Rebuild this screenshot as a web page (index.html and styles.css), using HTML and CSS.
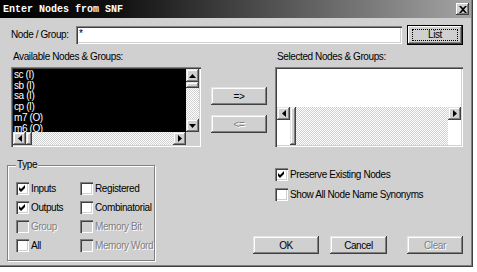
FILE: index.html
```html
<!DOCTYPE html>
<html lang="en">
<head>
    <meta charset="UTF-8">
    <title>Enter Nodes from SNF</title>
    <link rel="stylesheet" href="styles.css">
</head>
<body>
    <div class="dialog">
        <div class="titlebar">
            <span class="title">Enter Nodes from SNF</span>
            <span class="close-btn">
                <svg width="8" height="7" viewBox="0 0 8 7"><path d="M0 0h2l2 2 2-2h2L5 3.5 8 7H6L4 5 2 7H0l3-3.5z" fill="#000"/></svg>
            </span>
        </div>

        <div class="node-row">
            <span class="node-label">Node / Group:</span>
            <div class="text-input">*</div>
            <div class="btn btn-default list-btn"><span class="focus-rect">List</span></div>
        </div>

        <div class="caption-row">
            <span class="caption avail-caption">Available Nodes &amp; Groups:</span>
            <span class="caption">Selected Nodes &amp; Groups:</span>
        </div>

        <div class="lists-row">
            <div class="listbox avail-list">
                <div class="list-top">
                    <div class="list-items dark">
                        <div>sc (I)</div>
                        <div>sb (I)</div>
                        <div>sa (I)</div>
                        <div>cp (I)</div>
                        <div>m7 (O)</div>
                        <div>m6 (O)</div>
                    </div>
                    <div class="vscroll">
                        <span class="sb-btn"><svg width="7" height="4" viewBox="0 0 7 4"><path d="M3.5 0L7 4H0z"/></svg></span>
                        <span class="sb-thumb v-thumb"></span>
                        <span class="sb-track"></span>
                        <span class="sb-btn"><svg width="7" height="4" viewBox="0 0 7 4"><path d="M0 0h7L3.5 4z"/></svg></span>
                    </div>
                </div>
                <div class="hscroll-row">
                    <div class="hscroll">
                        <span class="sb-btn"><svg width="4" height="7" viewBox="0 0 4 7"><path d="M0 3.5L4 0v7z"/></svg></span>
                        <span class="sb-thumb h-thumb"></span>
                        <span class="sb-track"></span>
                        <span class="sb-btn"><svg width="4" height="7" viewBox="0 0 4 7"><path d="M0 0l4 3.5L0 7z"/></svg></span>
                    </div>
                    <span class="sb-corner"></span>
                </div>
            </div>

            <div class="move-btns">
                <div class="btn move-btn">=&gt;</div>
                <div class="btn move-btn disabled">&lt;=</div>
            </div>

            <div class="listbox sel-list">
                <div class="list-top">
                    <div class="list-items"></div>
                </div>
                <div class="hscroll">
                    <span class="sb-btn"><svg width="4" height="7" viewBox="0 0 4 7"><path d="M0 3.5L4 0v7z"/></svg></span>
                    <span class="sb-thumb h-thumb"></span>
                    <span class="sb-track"></span>
                    <span class="sb-btn"><svg width="4" height="7" viewBox="0 0 4 7"><path d="M0 0l4 3.5L0 7z"/></svg></span>
                </div>
            </div>
        </div>

        <div class="bottom-row">
            <fieldset class="type-group">
                <legend>Type</legend>
                <div class="type-grid">
                    <div class="check"><span class="cb checked"></span>Inputs</div>
                    <div class="check"><span class="cb"></span>Registered</div>
                    <div class="check"><span class="cb checked"></span>Outputs</div>
                    <div class="check"><span class="cb"></span>Combinatorial</div>
                    <div class="check disabled"><span class="cb"></span>Group</div>
                    <div class="check disabled"><span class="cb"></span>Memory Bit</div>
                    <div class="check"><span class="cb"></span>All</div>
                    <div class="check disabled"><span class="cb"></span>Memory Word</div>
                </div>
            </fieldset>

            <div class="options">
                <div class="check opt"><span class="cb checked"></span>Preserve Existing Nodes</div>
                <div class="check opt"><span class="cb"></span>Show All Node Name Synonyms</div>
                <div class="action-btns">
                    <div class="btn ok-btn">OK</div>
                    <div class="btn cancel-btn">Cancel</div>
                    <div class="btn clear-btn disabled">Clear</div>
                </div>
            </div>
        </div>
    </div>
</body>
</html>
```

FILE: styles.css
```css
* {
    box-sizing: border-box;
}
body {
    margin: 0;
    background: #fff;
    font-family: "Liberation Sans", Arial, sans-serif;
    font-size: 10px;
    letter-spacing: -0.4px;
    color: #000;
}
.dialog {
    width: 473px;
    height: 267px;
    background: #d0d0d0;
    box-shadow: inset -1px -1px #404040, inset -2px -2px #808080;
    overflow: hidden;
}
.titlebar {
    height: 18px;
    margin-right: 2px;
    padding: 0 2px 0 3px;
    display: flex;
    align-items: center;
    justify-content: space-between;
    background: linear-gradient(to right, #000 0%, #111 25%, #a4a4a4 100%);
}
.title {
    font-family: "Liberation Mono", "DejaVu Sans Mono", monospace;
    font-weight: bold;
    font-size: 10px;
    letter-spacing: 0;
    color: #fff;
}
.close-btn {
    width: 13px;
    height: 12px;
    display: flex;
    align-items: center;
    justify-content: center;
    background: #d0d0d0;
    box-shadow: inset -1px -1px #404040, inset 1px 1px #fff, inset -2px -2px #808080;
}

/* raised 3d buttons */
.btn, .sb-btn, .sb-thumb {
    background: #d0d0d0;
    box-shadow: inset -1px -1px #404040, inset 1px 1px #e4e4e4, inset -2px -2px #808080, inset 2px 2px #fff;
}
.btn {
    display: flex;
    align-items: center;
    justify-content: center;
    height: 18px;
}
.btn.disabled {
    color: #808080;
    text-shadow: 1px 1px #fff;
}

.node-row {
    display: flex;
    align-items: center;
    height: 21px;
    margin-top: 6px;
    padding-left: 11px;
}
.node-label {
    width: 65px;
    white-space: nowrap;
}
.text-input {
    width: 326px;
    height: 18px;
    padding: 2px 3px;
    line-height: 12px;
    background: #fff;
    box-shadow: inset 1px 1px #808080, inset 2px 2px #404040, inset -1px -1px #fff, inset -2px -2px #d0d0d0;
}
.list-btn {
    width: 56px;
    height: 20px;
    margin-left: 5px;
    border: 1px solid #000;
    box-shadow: inset -1px -1px #404040, inset 1px 1px #fff, inset -2px -2px #808080;
}
.focus-rect {
    width: 46px;
    height: 12px;
    border: 1px dotted #000;
    display: flex;
    align-items: center;
    justify-content: center;
}

.caption-row {
    display: flex;
    height: 12px;
    line-height: 12px;
    margin-top: 6px;
    padding-left: 13px;
}
.avail-caption {
    width: 264px;
}

.lists-row {
    display: flex;
    height: 80px;
    margin-top: 4px;
    padding-left: 11px;
}
.listbox {
    height: 80px;
    padding: 2px;
    display: flex;
    flex-direction: column;
    background: #fff;
    box-shadow: inset 1px 1px #808080, inset 2px 2px #404040, inset -1px -1px #fff, inset -2px -2px #d0d0d0;
}
.avail-list {
    width: 190px;
}
.sel-list {
    width: 188px;
    margin-left: 8px;
}
.list-top {
    flex: 1;
    display: flex;
    min-height: 0;
}
.list-items {
    flex: 1;
    overflow: hidden;
    padding: 1px 1px 0;
    line-height: 10.7px;
}
.list-items.dark {
    background: #000;
    color: #fff;
}
.vscroll {
    width: 13px;
    display: flex;
    flex-direction: column;
}
.hscroll-row {
    display: flex;
    height: 13px;
}
.hscroll {
    flex: 1;
    height: 13px;
    display: flex;
}
.sb-btn {
    flex: none;
    width: 13px;
    height: 13px;
    display: flex;
    align-items: center;
    justify-content: center;
}
.sb-btn svg {
    fill: #000;
}
.sb-track {
    flex: 1;
    background: repeating-conic-gradient(#fff 0 25%, #d0d0d0 0 50%) 0 0 / 2px 2px;
}
.v-thumb {
    height: 6px;
}
.h-thumb {
    width: 6px;
}
.sb-corner {
    width: 13px;
    background: #d0d0d0;
}

.move-btns {
    width: 56px;
    margin-left: 10px;
    padding-top: 20px;
    display: flex;
    flex-direction: column;
    gap: 10px;
}

.bottom-row {
    display: flex;
    align-items: flex-start;
    margin-top: 12px;
    padding-left: 7px;
}
.type-group {
    width: 148px;
    height: 102px;
    margin: 0;
    padding: 8px 0 0 8px;
    border: 1px solid #808080;
    box-shadow: 1px 1px 0 #fff, inset 1px 1px 0 #fff;
    min-inline-size: 0;
}
.type-group legend {
    padding: 0 1px;
    line-height: 12px;
    background: #d0d0d0;
}
.type-grid {
    display: grid;
    grid-template-columns: 64px 1fr;
    grid-auto-rows: 19px;
}
.check {
    display: flex;
    align-items: center;
    white-space: nowrap;
    overflow: hidden;
}
.check.disabled {
    color: #808080;
    text-shadow: 1px 1px #fff;
}
.cb {
    flex: none;
    width: 13px;
    height: 13px;
    margin-right: 2px;
    background: #fff;
    box-shadow: inset 1px 1px #808080, inset 2px 2px #404040, inset -1px -1px #fff, inset -2px -2px #d0d0d0;
}
.check.disabled .cb {
    background: #d0d0d0;
}
.cb.checked {
    background: #fff url("data:image/svg+xml,%3Csvg xmlns='http://www.w3.org/2000/svg' width='13' height='13'%3E%3Cpath d='M3 5l2 2 4-4v3l-4 4-2-2z'/%3E%3C/svg%3E") no-repeat;
}

.options {
    margin-left: 98px;
    padding-top: 6px;
    width: 212px;
}
.check.opt {
    height: 19px;
    margin-bottom: 1px;
    padding-left: 22px;
}
.action-btns {
    display: flex;
    margin-top: 32px;
}
.ok-btn {
    width: 66px;
}
.cancel-btn {
    width: 57px;
    margin-left: 11px;
}
.clear-btn {
    width: 56px;
    margin-left: 20px;
}
```
